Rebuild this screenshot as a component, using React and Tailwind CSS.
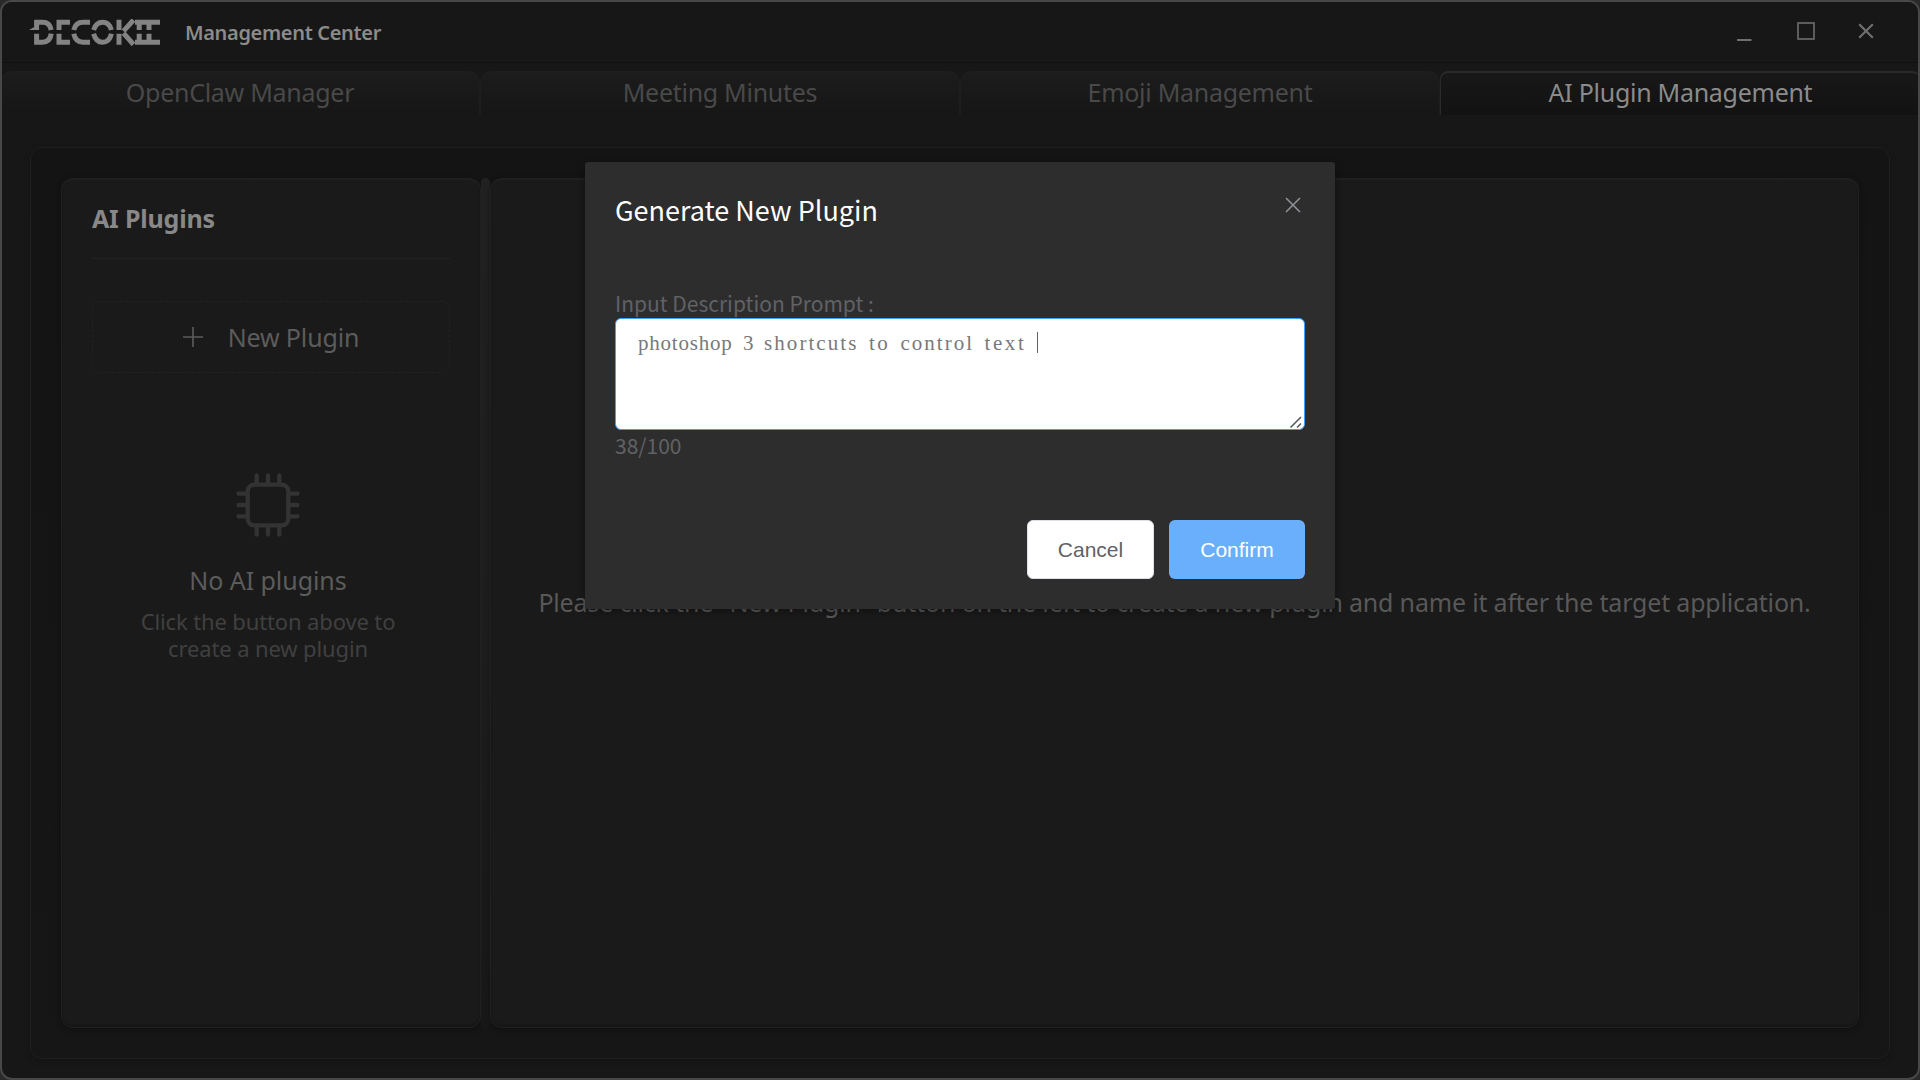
const tabs = [
  { name: "OpenClaw Manager" },
  { name: "Meeting Minutes" },
  { name: "Emoji Management" },
  { name: "AI Plugin Management", active: true },
];

// Half-width cells of 10.5px, the tracking fills each word up to its cells
const promptWords = [
  { text: "photoshop", className: "w-[94.5px] tracking-[0.78px]" },
  { text: "3", className: "w-[10.5px]" },
  { text: "shortcuts", className: "w-[94.5px] tracking-[2.07px]" },
  { text: "to", className: "w-[21px] tracking-[2.33px]" },
  { text: "control", className: "w-[73.5px] tracking-[2px]" },
  { text: "text", className: "w-[42px] tracking-[2.6px]" },
];

const Logo = () => (
  <svg className="h-[27px] w-[133px] text-[#838383]" viewBox="0 0 133 27" fill="none" stroke="currentColor" strokeWidth="5">
    <path d="M0 11L5.3 8V11Z" fill="currentColor" stroke="none" />
    {/* upper halves */}
    <path d="M7.6 11V3.2H13.5Q21 3.2 22.2 11" />
    <path d="M30 11V3.2H41" />
    <path d="M44.8 11Q46.5 3.2 54 3.2H61" />
    <path d="M64.6 11Q67 3.2 73.5 3.2Q80.5 3.2 82.4 11" />
    <path d="M90 11V0.7M94.5 12.2L104.5 1" />
    <path d="M106 3.2H131M110.2 3.2V11M120 3.2V11" />
    {/* lower halves */}
    <path d="M7.6 14.7V23.2H13.5Q21 23.2 22.2 14.7" />
    <path d="M30 14.7V23.2H41" />
    <path d="M44.8 14.7Q46.5 23.2 54 23.2H61" />
    <path d="M64.6 14.7Q67 23.2 73.5 23.2Q80.5 23.2 82.4 14.7" />
    <path d="M90 14.7V25.7M94.5 14.2L104.5 25.5" />
    <path d="M106 23.2H131M110.2 14.7V23.2M120 14.7V23.2" />
  </svg>
);

const ChipIcon = () => (
  <svg className="size-16 text-[#333333]" viewBox="0 0 64 64" fill="none" stroke="currentColor" strokeWidth="4.3" strokeLinecap="round">
    <rect x="11.7" y="11.7" width="40.6" height="40.6" rx="6.5" />
    <path d="M20.7 2.5V9M32 2.5V9M43.3 2.5V9M20.7 55V61.5M32 55V61.5M43.3 55V61.5" />
    <path d="M2.5 20.7H9M2.5 32H9M2.5 43.3H9M55 20.7H61.5M55 32H61.5M55 43.3H61.5" />
  </svg>
);

const Header = () => (
  <header className="flex h-[61px] shrink-0 items-center border-b border-[#111111] bg-[#171717] pl-[27px] pr-[44px]">
    <Logo />
    <h1 className="mt-px ml-[23px] text-[20px] leading-none font-semibold tracking-[-0.33px] text-[#8b8b8b]">
      Management Center
    </h1>
    <div className="mb-[2px] ml-auto flex items-center text-[#6f6f6f]">
      <svg className="h-5 w-[15px]" viewBox="0 0 15 20" stroke="currentColor" strokeWidth="2">
        <path d="M0 19H14.5" />
      </svg>
      <svg className="ml-[45px] size-[18px]" viewBox="0 0 18 18" fill="none" stroke="currentColor" strokeWidth="1.6">
        <rect x="1" y="1" width="16" height="16" />
      </svg>
      <svg className="ml-[43px] size-4" viewBox="0 0 16 16" stroke="currentColor" strokeWidth="2.2">
        <path d="M1.2 1.2L14.8 14.8M14.8 1.2L1.2 14.8" />
      </svg>
    </div>
  </header>
);

const Tabs = () => (
  <nav className="-mx-0.5 mt-2 grid h-11 shrink-0 grid-cols-4">
    {tabs.map((tab) => (
      <div
        key={tab.name}
        className={
          tab.active
            ? "flex items-center justify-center rounded-t-lg border-t-2 border-l border-[#2a2a2a] bg-linear-to-b from-[#181818] to-[#121212] pb-[2px] text-[25px] tracking-[-0.28px] text-[#8b8b8b]"
            : "flex items-center justify-center rounded-t-xl border-x border-t-2 border-[#1e1e1e] border-b-transparent bg-linear-to-b from-[#1c1c1c] to-[#161616] pb-[2px] text-[25px] tracking-[-0.28px] text-[#494949]"
        }
      >
        {tab.name}
      </div>
    ))}
  </nav>
);

const Sidebar = () => (
  <aside className="flex w-[420px] shrink-0 flex-col rounded-xl border border-t-2 border-[#202020] bg-[#1a1a1a] px-[30px] shadow-[0_2px_6px_rgba(0,0,0,0.3),inset_0_-2px_2px_rgba(0,0,0,0.2)]">
    <h2 className="flex h-[79px] items-center border-b border-[#222222] text-[25px] font-bold tracking-[-0.2px] text-[#888888]">
      AI Plugins
    </h2>
    <button className="mt-[42px] flex h-[72px] items-center justify-center rounded-lg border border-dashed border-[#222222] text-[25px] text-[#5c5c5c]">
      <svg className="size-5" viewBox="0 0 20 20" stroke="currentColor" strokeWidth="1.6">
        <path d="M10 0V20M0 10H20" />
      </svg>
      <span className="mt-px ml-[25px] tracking-[-0.15px]">New Plugin</span>
    </button>
    <div className="mt-[100px] flex flex-col items-center pr-[6px]">
      <ChipIcon />
      <p className="mt-[26px] text-[25px] leading-[34px] tracking-[-0.06px] text-[#5c5c5c]">No AI plugins</p>
      <p className="mt-[11px] w-[270px] text-center text-[22px] leading-[27px] tracking-[-0.13px] text-[#404040]">
        Click the button above to create a new plugin
      </p>
    </div>
  </aside>
);

const PluginDialog = () => (
  <div className="absolute top-[162px] left-[585px] h-[447px] w-[750px] rounded-[3px] bg-[#2d2d2d] p-[30px] font-['Noto_Sans_CJK_SC',sans-serif] shadow-[0_2px_8px_rgba(0,0,0,0.4)]">
    <div className="flex h-[34px] items-start justify-between">
      <h3 className="text-[27px] leading-[36px] text-white">Generate New Plugin</h3>
      <svg className="mt-[5px] mr-1 size-4" viewBox="0 0 16 16" stroke="#909399" strokeWidth="1.5">
        <path d="M1 1L15 15M15 1L1 15" />
      </svg>
    </div>
    <div className="mt-[62px] text-[21px] leading-[30px] text-[#606266]">
      <p>Input Description Prompt :</p>
      <div className="relative h-[112px] rounded-md border border-[#409eff] bg-white pt-2 pl-[22px]">
        <div className="flex h-[31px] items-center gap-[10.5px] font-['Liberation_Serif',serif] text-[#77797c]">
          {promptWords.map((word) => (
            <span key={word.text} className={word.className}>
              {word.text}
            </span>
          ))}
          <span className="h-[21px] w-px bg-[#606266]" />
        </div>
        <svg className="absolute right-[2px] bottom-[1px] size-3" viewBox="0 0 12 12" stroke="#555555" strokeWidth="1.5">
          <path d="M0.5 11.5L11 1M7 11.5L11 7.5" />
        </svg>
      </div>
      <p>38/100</p>
    </div>
    <div className="mt-[60px] flex justify-end gap-[15px] font-['Liberation_Sans',sans-serif] text-[21px]">
      <button className="h-[59px] w-[127px] rounded-md border border-[#dcdfe6] bg-white text-[#606266]">
        Cancel
      </button>
      <button className="h-[59px] w-[136px] rounded-md bg-[#69affc] text-white">Confirm</button>
    </div>
  </div>
);

const App = () => {
  return (
    <div className="h-[1080px] w-[1920px] overflow-hidden bg-[#2a2a2a] font-['Noto_Sans',sans-serif]">
      <div className="relative flex h-full flex-col overflow-hidden rounded-xl border-2 border-[#484848] bg-[#171717]">
        <Header />
        <Tabs />
        <main className="mx-7 mt-8 flex h-[912px] rounded-xl border border-[#1f1f1f] bg-linear-to-b from-[#141414] to-[#161616] p-[30px] shadow-[0_2px_6px_rgba(0,0,0,0.2)]">
          <Sidebar />
          <div className="w-[9px] shrink-0 rounded-full bg-linear-to-b from-[#212121] via-[#1e1e1e] to-[#181818]" />
          <section className="flex flex-1 items-center justify-center rounded-xl border border-t-2 border-[#202020] bg-[#1a1a1a] text-[25px] whitespace-nowrap text-[#585858] shadow-[0_2px_6px_rgba(0,0,0,0.3),inset_0_-2px_2px_rgba(0,0,0,0.2)]">
            <p className="mb-[2px] tracking-[-0.18px]">
              Please click the "New Plugin" button on the left to create a new plugin and name it after the target
              application.
            </p>
          </section>
        </main>
      </div>
      <PluginDialog />
    </div>
  );
};

export default App;
